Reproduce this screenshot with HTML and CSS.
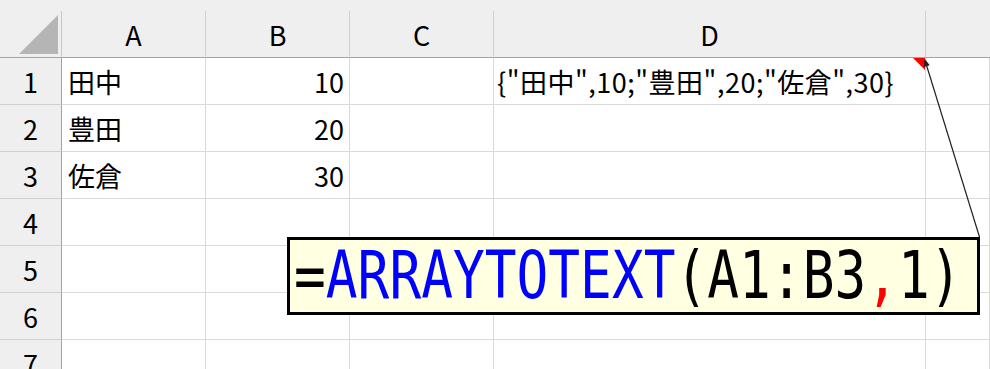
FILE: index.html
```html
<!DOCTYPE html>
<html lang="ja">

<head>
    <meta charset="UTF-8">
    <meta name="viewport" content="width=device-width, initial-scale=1.0">
    <title>ARRAYTOTEXT</title>
    <link rel="stylesheet" href="styles.css">
</head>

<body>
    <div class="top-strip"></div>

    <div class="sheet">
        <!-- header row -->
        <div class="corner"><span class="corner-tri"></span></div>
        <div class="col-head">A</div>
        <div class="col-head">B</div>
        <div class="col-head">C</div>
        <div class="col-head">D</div>
        <div class="col-head last"></div>

        <div class="row-head">1</div>
        <div class="cell">田中</div>
        <div class="cell num">10</div>
        <div class="cell"></div>
        <div class="cell has-comment">{"田中",10;"豊田",20;"佐倉",30}</div>
        <div class="cell"></div>

        <div class="row-head">2</div>
        <div class="cell">豊田</div>
        <div class="cell num">20</div>
        <div class="cell"></div>
        <div class="cell"></div>
        <div class="cell"></div>

        <div class="row-head">3</div>
        <div class="cell">佐倉</div>
        <div class="cell num">30</div>
        <div class="cell"></div>
        <div class="cell"></div>
        <div class="cell"></div>

        <div class="row-head">4</div>
        <div class="cell"></div>
        <div class="cell"></div>
        <div class="cell"></div>
        <div class="cell"></div>
        <div class="cell"></div>

        <div class="row-head">5</div>
        <div class="cell"></div>
        <div class="cell"></div>
        <div class="cell"></div>
        <div class="cell"></div>
        <div class="cell"></div>

        <div class="row-head">6</div>
        <div class="cell"></div>
        <div class="cell"></div>
        <div class="cell"></div>
        <div class="cell"></div>
        <div class="cell"></div>

        <div class="row-head">7</div>
        <div class="cell"></div>
        <div class="cell"></div>
        <div class="cell"></div>
        <div class="cell"></div>
        <div class="cell"></div>
    </div>

    <!-- comment arrow from the callout to D1 -->
    <svg class="arrow" width="990" height="369" viewBox="0 0 990 369">
        <line x1="979.5" y1="237" x2="926.6" y2="65.5" stroke="#222" stroke-width="1.2" />
        <polygon points="924.5,58.5 929.7,65.2 924,67" fill="#222" />
    </svg>

    <div class="callout">
        <span class="formula"><span class="eq">=</span><span class="fn">ARRAYTOTEXT</span>(A1:B3<span class="sep">,</span>1)</span>
    </div>
</body>

</html>
```

FILE: styles.css
```css
body {
    margin: 0;
    width: 990px;
    height: 369px;
    overflow: hidden;
    background: #fff;
    font-family: "Noto Sans CJK JP", "Noto Sans", sans-serif;
    font-size: 27px;
    color: #000;
    position: relative;
}

.top-strip {
    height: 11px;
    background: #efefef;
}

.sheet {
    display: grid;
    grid-template-columns: 62px 144px 144px 144px 432px 1fr;
    grid-auto-rows: 47px;
}

.sheet > div {
    box-sizing: border-box;
}

.corner {
    background: #efefef;
    border-right: 1px solid #c6c6c6;
    border-bottom: 1px solid #a3a3a3;
    display: flex;
    justify-content: flex-end;
    align-items: flex-end;
    padding: 0 3px 3px 0;
}

.corner-tri {
    width: 0;
    height: 0;
    border-bottom: 39px solid #b5b5b5;
    border-left: 39px solid transparent;
}

.col-head {
    background: #efefef;
    border-right: 1px solid #d0d0d0;
    border-bottom: 1px solid #a3a3a3;
    display: flex;
    justify-content: center;
    align-items: center;
}

.col-head.last {
    border-right: none;
}

.row-head {
    background: #efefef;
    border-right: 1px solid #a3a3a3;
    border-bottom: 1px solid #d0d0d0;
    display: flex;
    justify-content: center;
    align-items: center;
}

.cell {
    border-right: 1px solid #dadada;
    border-bottom: 1px solid #dadada;
    display: flex;
    align-items: center;
    padding: 0 5px 0 6px;
    white-space: nowrap;
}

.cell.num {
    justify-content: flex-end;
}

.has-comment {
    position: relative;
    padding-left: 3px;
    letter-spacing: 0.5px;
}

/* red comment marker in the top-right corner */
.has-comment::after {
    content: "";
    position: absolute;
    top: 0;
    right: 0;
    width: 0;
    height: 0;
    border-top: 12px solid #ff0000;
    border-left: 12px solid transparent;
}

.arrow {
    position: absolute;
    left: 0;
    top: 0;
    pointer-events: none;
}

.callout {
    position: absolute;
    left: 287px;
    top: 237px;
    width: 693px;
    height: 78px;
    box-sizing: border-box;
    border: 3px solid #000;
    background: #ffffe1;
    display: flex;
    align-items: center;
    padding-left: 4px;
    overflow: hidden;
}

.formula {
    display: inline-block;
    font-family: "DejaVu Sans Mono", "Liberation Mono", monospace;
    font-size: 66px;
    line-height: 1;
    color: #000;
    white-space: nowrap;
    transform: scaleX(0.8);
    transform-origin: left center;
}

.fn {
    color: #0000ff;
}

.sep {
    color: #ff0000;
}
```
